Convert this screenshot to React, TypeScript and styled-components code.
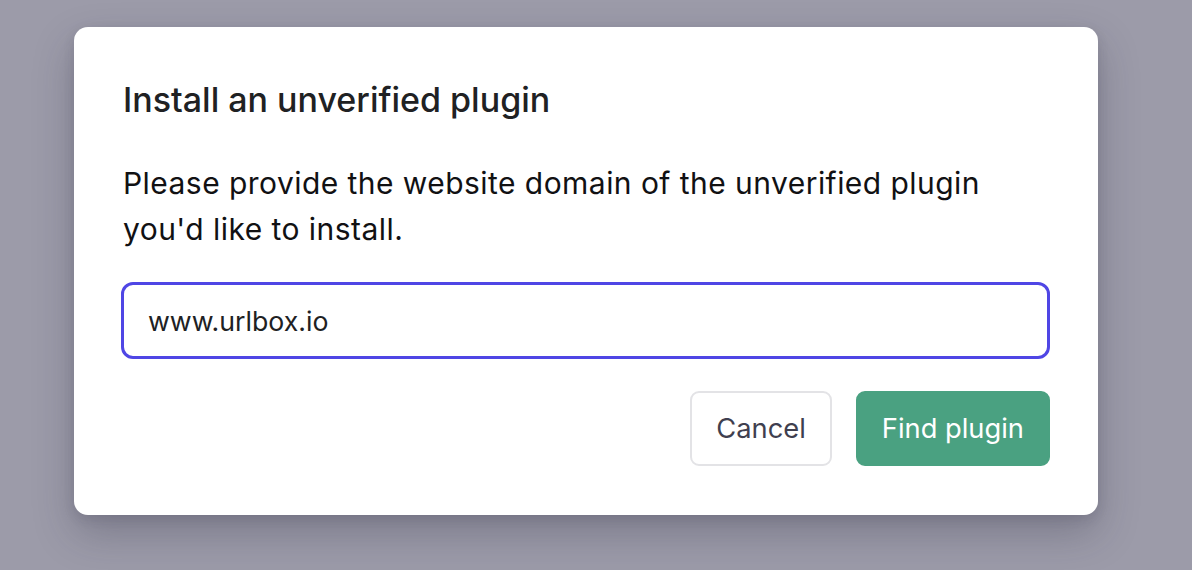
import * as React from 'react';
import styled, { createGlobalStyle } from 'styled-components';

const GlobalStyle = createGlobalStyle`
  html, body {
    margin: 0;
    padding: 0;
    background: #9c9ba9;
  }
  body {
    font-family: Inter, "Noto Sans", sans-serif;
    -webkit-font-smoothing: antialiased;
  }
`;

const Backdrop = styled.div`
  width: 1192px;
  height: 570px;
  box-sizing: border-box;
  padding: 27px 94px 0 74px;
  overflow: hidden;
`;

const Dialog = styled.div`
  width: 1024px;
  box-sizing: border-box;
  padding: 48px 48px 49px 49px;
  background: #ffffff;
  border-radius: 14px;
  box-shadow: 0 18px 40px rgba(40, 40, 60, 0.28), 0 4px 12px rgba(40, 40, 60, 0.12);
  display: flex;
  flex-direction: column;
`;

const Title = styled.h2`
  margin: 0;
  font-size: 34px;
  line-height: 50px;
  font-weight: 500;
  color: #202123;
`;

const Description = styled.p`
  margin: 35px 0 0;
  font-size: 30px;
  letter-spacing: 0.45px;
  line-height: 46px;
  color: #111113;
  max-width: 880px;
`;

const DomainInput = styled.input`
  margin: 30px 0 0 -2px;
  height: 77px;
  box-sizing: border-box;
  border: 3px solid #4f46e5;
  border-radius: 12px;
  padding: 0 24px;
  font-family: inherit;
  font-size: 26.7px;
  color: #202123;
  outline: none;
  background: #fff;
`;

const Actions = styled.div`
  margin-top: 32px;
  display: flex;
  justify-content: flex-end;
  gap: 24px;
`;

const Button = styled.button<{ $primary?: boolean }>`
  height: 75px;
  box-sizing: border-box;
  padding: 0 24px;
  border-radius: 9px;
  font-family: inherit;
  font-size: 27.3px;
  font-weight: 400;
  cursor: pointer;
  border: ${(p) => (p.$primary ? '2px solid #4aa181' : '2px solid #e3e3e6')};
  background: ${(p) => (p.$primary ? '#4aa181' : '#ffffff')};
  color: ${(p) => (p.$primary ? '#ffffff' : '#3f3f4f')};
`;

export default function App() {
  return (
    <>
      <GlobalStyle />
      <Backdrop>
        <Dialog>
          <Title>Install an unverified plugin</Title>
          <Description>
            Please provide the website domain of the unverified plugin you'd like to install.
          </Description>
          <DomainInput defaultValue="www.urlbox.io" />
          <Actions>
            <Button>Cancel</Button>
            <Button $primary>Find plugin</Button>
          </Actions>
        </Dialog>
      </Backdrop>
    </>
  );
}
